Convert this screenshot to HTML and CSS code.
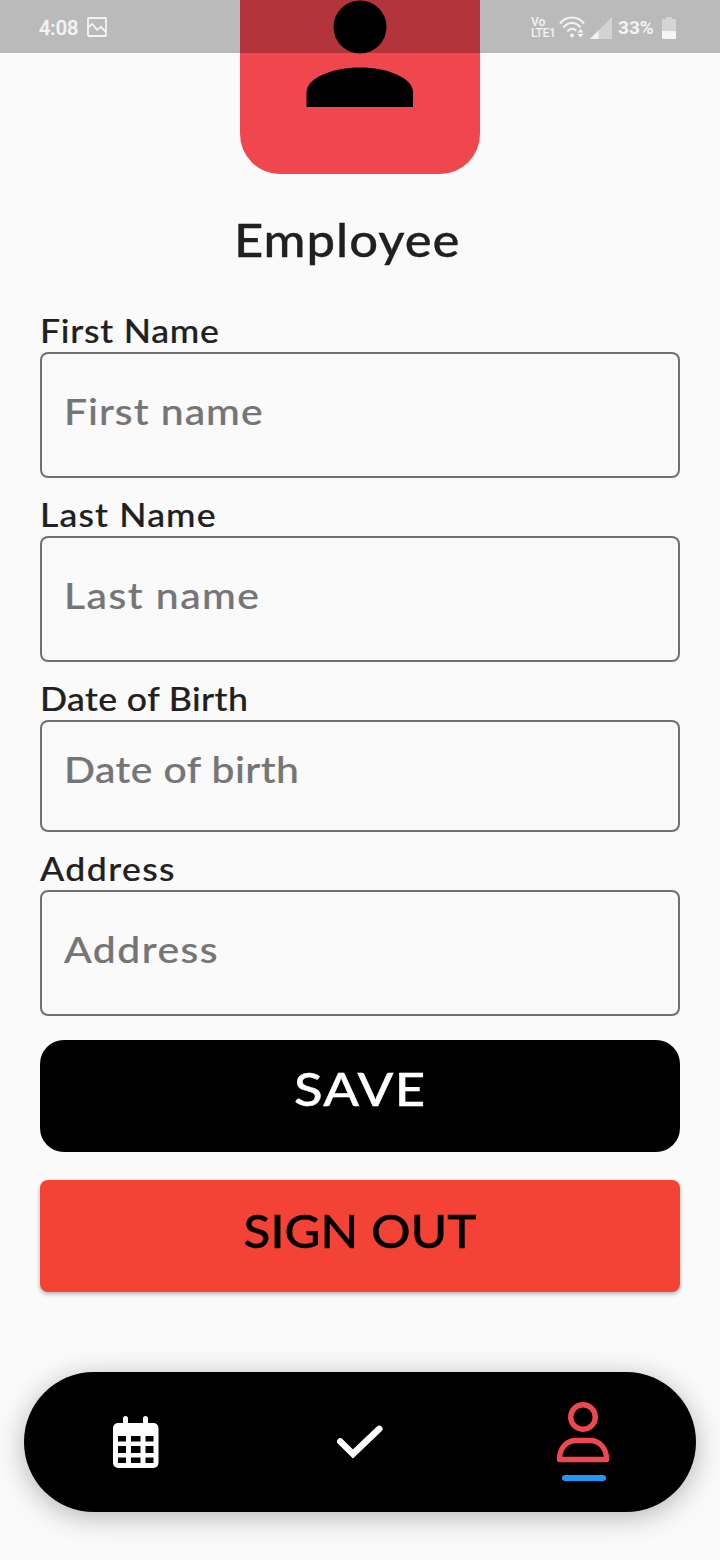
FILE: index.html
```
<!DOCTYPE html>
<html lang="en">
<head>
<meta charset="utf-8">
<title>Employee</title>
<link rel="stylesheet" href="styles.css">
</head>
<body>
<header class="status">
  <div class="status-left">
    <span class="clock">4:08</span>
    <svg class="pic" width="20" height="20" viewBox="0 0 20 20" fill="none" stroke="currentColor" stroke-width="1.8"><rect x="1" y="1" width="18" height="18" rx="1"/><path d="m1 10.500 4.300-3.500 4.700 5.700 4-2.700 5 5"/></svg>
  </div>
  <div class="status-right">
    <div class="volte"><span>Vo</span><span>LTE1</span></div>
    <svg class="wifi" width="26" height="23" viewBox="0 0 26 23" fill="none" stroke="currentColor" stroke-width="2.100"><path d="M1 7.500C7-.5 19-.5 25 7.500M4.500 11.500c4.500-6 12.500-6 17 0M8.300 15.500c2.500-3.500 6.500-3.500 8.900-.8"/><circle cx="13" cy="19.500" r="1.900" fill="currentColor" stroke="none"/><path d="m18.500 16.500 3-3.500 3 3.500zM18.500 18l3 3.500 3-3.500z" fill="currentColor" stroke="none"/></svg>
    <svg class="signal" width="22" height="22" viewBox="0 0 22 22"><path d="M22 0v22H0z" fill="#d3d3d3"/><path d="M8.500 13.500V22H0z" fill="#f3f3f3"/></svg>
    <span class="percent">33%</span>
    <svg class="battery" width="14" height="22" viewBox="0 0 14 22"><path d="M4 0h6v2h3a1 1 0 0 1 1 1v11H0V3a1 1 0 0 1 1-1h3z" fill="#d5d5d5"/><path d="M0 14h14v7a1 1 0 0 1-1 1H1a1 1 0 0 1-1-1z" fill="#f5f5f5"/></svg>
  </div>
</header>
<main class="page">
  <div class="avatar">
    <svg width="108" height="108" viewBox="0 0 108 108"><circle cx="54" cy="27" r="26.500"/><path d="M.5 107V92C.5 78 27 67.500 54 67.500S107 78 107 92v15z"/></svg>
  </div>
  <h1 class="title"><span class="wide">Employee</span></h1>
  <form class="form">
    <div class="label label-first"><span class="wide">First Name</span></div>
    <div class="field field-first"><span class="wide">First name</span></div>
    <div class="label label-last"><span class="wide">Last Name</span></div>
    <div class="field field-last"><span class="wide">Last name</span></div>
    <div class="label label-birth"><span class="wide">Date of Birth</span></div>
    <div class="field field-birth"><span class="wide">Date of birth</span></div>
    <div class="label label-address"><span class="wide">Address</span></div>
    <div class="field field-address"><span class="wide">Address</span></div>
    <div class="button save"><span>SAVE</span></div>
    <div class="button signout"><span>SIGN OUT</span></div>
  </form>
</main>
<nav class="nav">
  <div class="nav-item">
    <svg width="46" height="52" viewBox="0 0 46 52"><path fill="#fff" fill-rule="evenodd" d="M10 7V2.500a2.500 2.500 0 0 1 5 0V7h15V2.500a2.500 2.500 0 0 1 5 0V7h5.500a5 5 0 0 1 5 5v35a5 5 0 0 1-5 5H5a5 5 0 0 1-5-5V12a5 5 0 0 1 5-5zM5 20v5.500h8V20zm13 0v5.500h9.500V20zm14.500 0v5.500h8V20zM5 30v7h8v-7zm13 0v7h9.500v-7zm14.500 0v7h8v-7zM5 41.500V47h8v-5.500zm13 0V47h9.500v-5.500zm14.500 0V47h8v-5.500z"/></svg>
  </div>
  <div class="nav-item">
    <svg width="48" height="34" viewBox="0 0 48 34" fill="none" stroke="#fff" stroke-width="6.600" stroke-linecap="round"><path d="M4.300 16.500 17 29 43.200 3.900"/></svg>
  </div>
  <div class="nav-item active">
    <svg width="56" height="62" viewBox="0 0 56 62" fill="none" stroke="#ee474f" stroke-width="5.400"><circle cx="27" cy="15" r="12.300"/><path d="M3.500 57.500C3.500 45.500 11 38.500 20 38.500h14c9 0 16.500 7 16.500 19z" stroke-linejoin="round"/></svg>
    <i class="marker"></i>
  </div>
</nav>
</body>
</html>
```
FILE: styles.css
```
* { box-sizing: border-box; }
body {
  margin: 0;
  width: 720px;
  height: 1560px;
  overflow: hidden;
  position: relative;
  background: #fafafa;
  color: #202020;
  font-family: Lato, sans-serif;
  font-weight: 500;
}
.status {
  position: absolute;
  inset: 0 0 auto;
  height: 53px;
  padding: 2px 44px 0 39px;
  display: flex;
  align-items: center;
  justify-content: space-between;
  background: rgba(0, 0, 0, .255);
  color: #f3f3f3;
  font-family: Roboto, sans-serif;
}
.status-left, .status-right { display: flex; align-items: center; }
.clock { font-size: 20px; font-weight: 500; width: 48px; -webkit-text-stroke: .3px; }
.pic { margin-top: -1px; }
.volte { display: flex; flex-direction: column; font-size: 12px; line-height: 11px; width: 28px; font-weight: 500; }
.volte span:last-child { letter-spacing: -.4px; }
.signal { margin: 0 6px 0 5px; }
.percent { font-size: 19px; font-weight: 700; width: 44px; }
.page { padding: 0 40px; }
.avatar {
  width: 240px;
  height: 174px;
  margin: 0 auto;
  display: flex;
  justify-content: center;
  background: #f0474e;
  border-radius: 0 0 40px 40px;
}
/* widened letterforms */
.wide { display: inline-block; transform: scaleX(1.08); transform-origin: 0 50%; }
.title {
  margin: 35px 0 40px;
  padding-left: 194px;
  font-size: 47px;
  line-height: 60px;
  font-weight: 500;
  letter-spacing: .9px;
  -webkit-text-stroke: .3px;
}
.form { display: flex; flex-direction: column; -webkit-text-stroke: .2px; }
.label {
  height: 43px;
  font-size: 33px;
  line-height: 42px;
  white-space: nowrap;
}
.label-first { letter-spacing: .7px; }
.label-last { letter-spacing: 1.06px; }
.label-birth { letter-spacing: .37px; }
.label-address { letter-spacing: 1.3px; }
.field {
  height: 126px;
  margin-bottom: 15px;
  padding: 35px 22px 0;
  border: 2px solid #707070;
  border-radius: 8px;
  color: #757575;
  font-size: 36.500px;
  line-height: 44px;
  white-space: nowrap;
}
.field .wide { transform: scaleX(1.12); }
.field-first { letter-spacing: .9px; }
.field-last { letter-spacing: 1.33px; }
.field-birth { height: 112px; padding-top: 25px; letter-spacing: .38px; }
.field-address { letter-spacing: 1.3px; }
.button {
  height: 112px;
  font-size: 47px;
  line-height: 60px;
  text-align: center;
  -webkit-text-stroke: .4px;
}
.button span { display: inline-block; }
.save { margin-top: 9px; padding: 18px 0 0; border-radius: 24px; background: #000; color: #fff; letter-spacing: 1.2px; }
.save span { transform: scaleX(1.12); }
.signout { margin-top: 28px; padding-top: 20px; border-radius: 8px; background: #f44336; color: #000; box-shadow: 0 2px 4px rgba(0, 0, 0, .3); letter-spacing: .1px; }
.signout span { transform: scaleX(1.05); }
.nav {
  position: absolute;
  left: 24px;
  right: 24px;
  top: 1372px;
  height: 140px;
  display: grid;
  grid-template-columns: repeat(3, 1fr);
  border-radius: 70px;
  background: #000;
  box-shadow: 0 5px 28px rgba(0, 0, 0, .28);
}
.nav-item { display: flex; flex-direction: column; align-items: center; justify-content: center; }
.active { padding-bottom: 1px; }
.marker { width: 44px; height: 6px; margin-top: 11px; border-radius: 3px; background: #2196f3; }
```
